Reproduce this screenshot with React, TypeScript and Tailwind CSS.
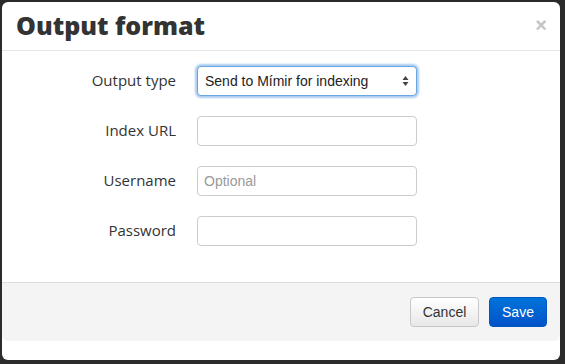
export default function App() {
  return (
    <div className="w-[565px] h-[364px] bg-[#2b2b2b] pt-[2px] pl-[2px] overflow-hidden">
      <div className="w-[558px] h-[358px] bg-white rounded-[6px] flex flex-col">
        <Header />
        <div className="h-[231px] pt-[15px] flex flex-col gap-[20px]">
          <Row label="Output type">
            <SelectBox />
          </Row>
          <Row label="Index URL">
            <TextInput />
          </Row>
          <Row label="Username">
            <TextInput placeholder="Optional" />
          </Row>
          <Row label="Password">
            <TextInput />
          </Row>
        </div>
        <Footer />
      </div>
    </div>
  );
}

function Header() {
  return (
    <div className="h-[49px] border-b border-[#e5e5e5] flex items-center justify-between pl-[14px] pr-[13px]">
      <h3 className="text-[25px] leading-none font-extrabold text-[#333] font-['Open_Sans',sans-serif] pb-[1px]">
        Output format
      </h3>
      <span className="text-[20px] leading-none font-bold text-[#c4c4c4] font-['Liberation_Sans',sans-serif] pb-[2px]">
        ×
      </span>
    </div>
  );
}

function Row({ label, children }: { label: string; children: React.ReactNode }) {
  return (
    <div className="flex items-center h-[30px]">
      <label className="w-[174px] text-right text-[15px] leading-none text-[#333] font-['Open_Sans',sans-serif] pb-[1px]">
        {label}
      </label>
      <div className="ml-[21px]">{children}</div>
    </div>
  );
}

function TextInput({ placeholder }: { placeholder?: string }) {
  return (
    <input
      type="text"
      placeholder={placeholder}
      className="block w-[220px] h-[30px] px-[6px] rounded-[4px] border border-[#cccccc] bg-white text-[14px] text-[#333] placeholder:text-[#999] font-['Liberation_Sans',sans-serif] outline-none"
    />
  );
}

function SelectBox() {
  return (
    <div className="w-[220px] h-[30px] rounded-[4px] border border-[#6aa5e4] bg-white shadow-[0_0_2px_2px_rgba(102,160,230,0.55)] flex items-center justify-between pl-[7px] pr-[7px]">
      <span className="text-[14px] text-[#222] font-['Liberation_Sans',sans-serif]">
        Send to Mímir for indexing
      </span>
      <svg width="7" height="12" viewBox="0 0 7 12" fill="#444">
        <path d="M3.5 1L6.5 5H0.5Z" />
        <path d="M3.5 11L6.5 7H0.5Z" />
      </svg>
    </div>
  );
}

function Footer() {
  return (
    <div className="flex flex-col">
      <div className="h-[59px] border-t border-[#dddddd] bg-[#f4f4f4] rounded-b-[6px] flex items-center justify-end gap-[10px] pr-[13px]">
        <button className="w-[69px] h-[30px] rounded-[4px] border border-[#c8c8c8] bg-gradient-to-b from-white to-[#e8e8e8] text-[14px] text-[#333] font-['Liberation_Sans',sans-serif]">
          Cancel
        </button>
        <button className="w-[58px] h-[30px] rounded-[4px] border border-[#0055c0] bg-gradient-to-b from-[#0074db] to-[#0052c8] text-[14px] text-white font-['Liberation_Sans',sans-serif]">
          Save
        </button>
      </div>
    </div>
  );
}
